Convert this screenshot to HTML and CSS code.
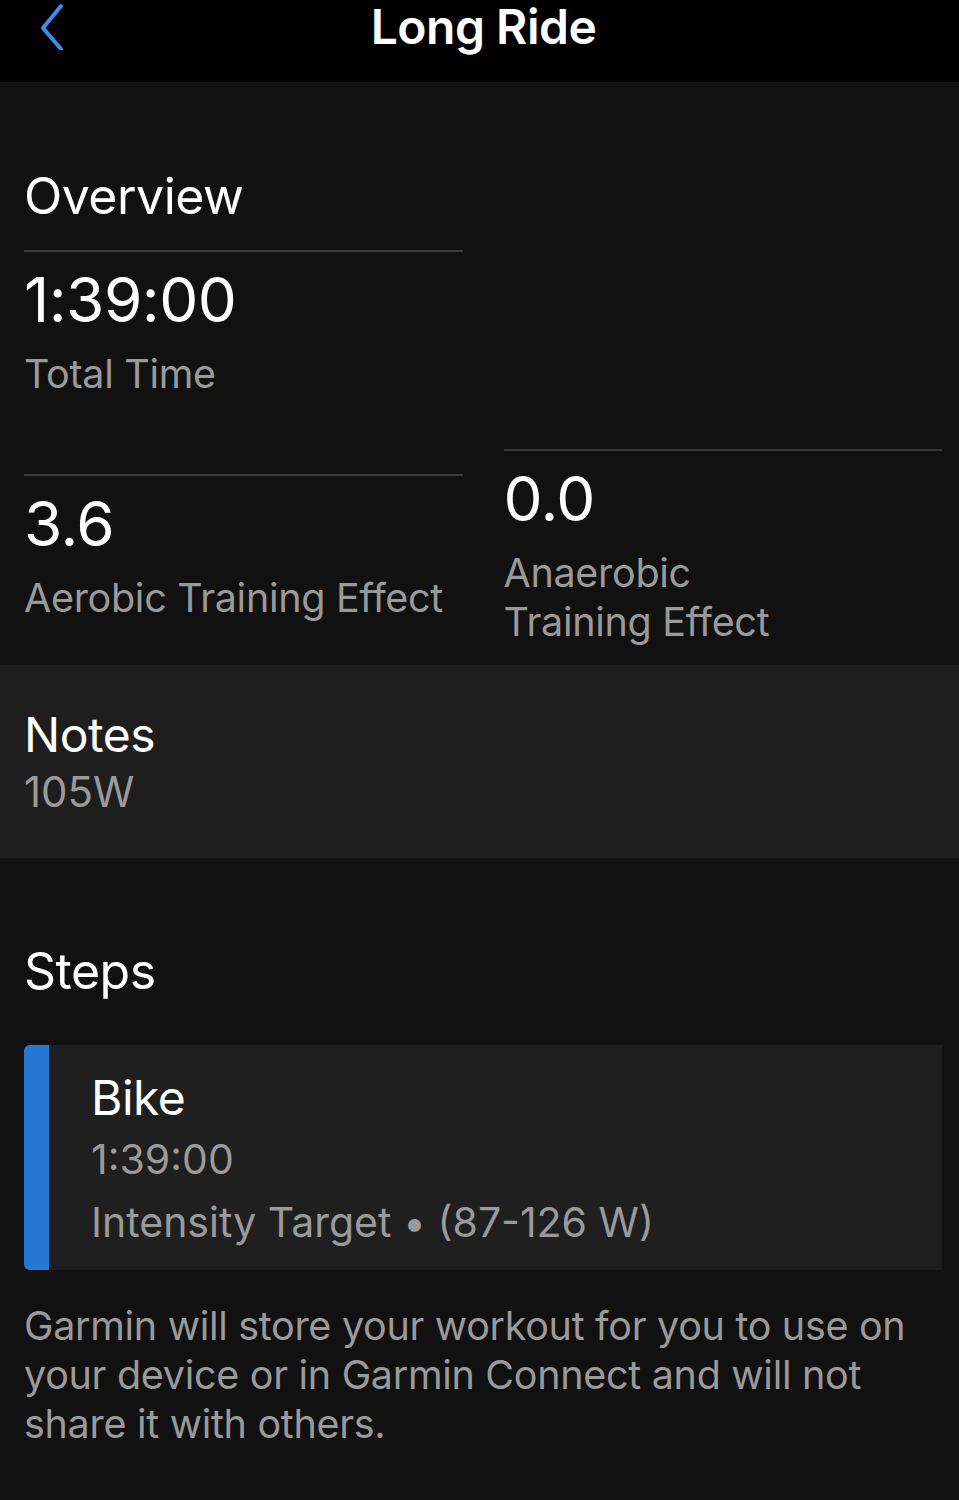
FILE: index.html
```html
<!DOCTYPE html>
<html lang="en">
<head>
  <meta charset="UTF-8">
  <meta name="viewport" content="width=device-width, initial-scale=1.0">
  <title>Long Ride</title>
  <link rel="stylesheet" href="styles.css">
</head>
<body>
  <header class="topbar">
    <svg class="back" width="30" height="48" viewBox="0 0 30 48">
      <path d="M24 4 L6 26 L24 47" fill="none" stroke="#3b8df0" stroke-width="4" stroke-linecap="round" stroke-linejoin="round"/>
    </svg>
    <h1>Long Ride</h1>
  </header>

  <section class="overview">
    <h2>Overview</h2>
    <div class="stats">
      <div class="stat">
        <div class="value">1:39:00</div>
        <div class="label">Total Time</div>
      </div>
      <div></div>
      <div class="stat">
        <div class="value">3.6</div>
        <div class="label">Aerobic Training Effect</div>
      </div>
      <div class="stat">
        <div class="value">0.0</div>
        <div class="label">Anaerobic<br>Training Effect</div>
      </div>
    </div>
  </section>

  <section class="notes">
    <div class="notes-title">Notes</div>
    <div class="notes-text">105W</div>
  </section>

  <section class="steps">
    <h2>Steps</h2>
    <div class="step">
      <div class="step-bar"></div>
      <div class="step-body">
        <div class="step-name">Bike</div>
        <div class="step-time">1:39:00</div>
        <div class="step-target">Intensity Target • (87-126 W)</div>
      </div>
    </div>
    <p class="disclaimer">Garmin will store your workout for you to use on your device or in Garmin Connect and will not share it with others.</p>
  </section>
</body>
</html>
```

FILE: styles.css
```css
body {
  margin: 0;
  background: #111111;
  color: #fff;
  font-family: Inter, "Noto Sans", sans-serif;
}
.topbar {
  height: 82px;
  background: #000;
  position: relative;
  text-align: center;
}
.back {
  position: absolute;
  left: 37px;
  top: 2px;
}
.topbar h1 {
  margin: 0;
  padding-left: 8px;
  font-size: 48px;
  font-weight: 600;
  line-height: 54px;
  letter-spacing: -0.5px;
}
.overview {
  padding: 84px 17px 18px 24px;
}
h2 {
  margin: 0;
  font-size: 50px;
  font-weight: 400;
  line-height: 60px;
  letter-spacing: -0.5px;
}
.stats {
  display: grid;
  grid-template-columns: 1fr 1fr;
  column-gap: 41px;
  row-gap: 50px;
  align-items: center;
  margin-top: 24px;
}
.stat {
  border-top: 2px solid #3a3a3a;
  padding-top: 12px;
}
.value {
  font-size: 62px;
  line-height: 72px;
  letter-spacing: -0.5px;
}
.label {
  margin-top: 14px;
  font-size: 39.5px;
  line-height: 49px;
  color: #9a9a9a;
  letter-spacing: -0.3px;
}
.notes {
  background: #1e1e1e;
  height: 193px;
  padding: 41px 24px 0;
  box-sizing: border-box;
}
.notes-title {
  font-size: 48px;
  line-height: 58px;
  letter-spacing: -0.5px;
}
.notes-text {
  font-size: 42px;
  line-height: 56px;
  color: #9a9a9a;
}
.steps {
  padding: 83px 17px 40px 24px;
}
.step {
  display: flex;
  margin-top: 44px;
  background: #1f1f1f;
  height: 225px;
  border-radius: 6px 0 0 6px;
}
.step-bar {
  width: 25px;
  background: #2777d5;
  border-radius: 6px 0 0 6px;
}
.step-body {
  padding: 22px 0 0 42px;
}
.step-name {
  font-size: 48px;
  line-height: 61px;
  letter-spacing: -0.5px;
}
.step-time, .step-target {
  font-size: 41px;
  line-height: 63px;
  color: #9a9a9a;
}
.disclaimer {
  margin: 32px 0 0;
  font-size: 39.5px;
  line-height: 49px;
  color: #9a9a9a;
  letter-spacing: -0.3px;
}
```
